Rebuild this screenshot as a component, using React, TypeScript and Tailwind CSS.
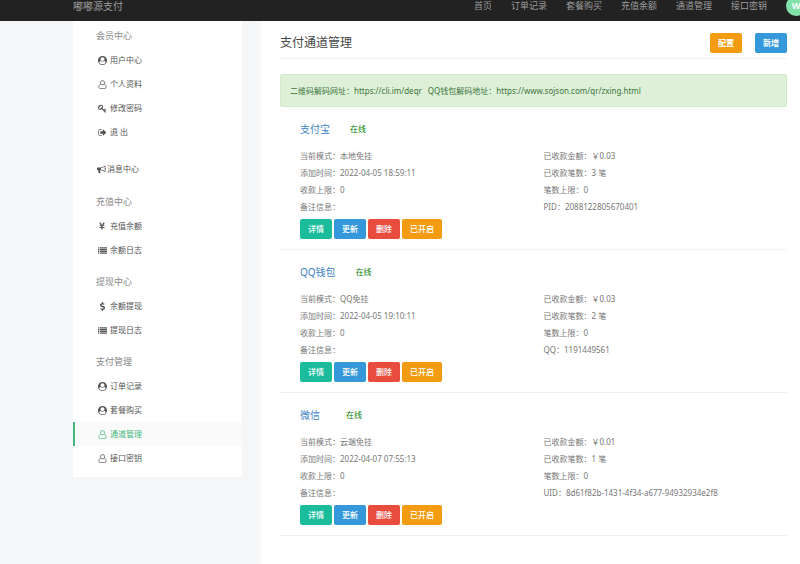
import type { ReactNode } from 'react'
import { FaDollarSign, FaYenSign } from 'react-icons/fa'

interface Channel {
  name: string
  mode: string
  addedAt: string
  amount: string
  count: number
  idLabel: string
  idValue: string
}

interface MenuItem {
  label: string
  icon: ReactNode
  active?: boolean
}

interface MenuGroup {
  title: string
  items: MenuItem[]
}

function Glyph({ d }: { d: string }) {
  return (
    <svg viewBox="0 0 1792 1792" className="h-[9px] w-[9px]" fill="currentColor" aria-hidden="true">
      <path d={d} />
    </svg>
  )
}

const KEY =
  'M832 512q0-80-56-136t-136-56-136 56-56 136q0 42 19 83-41-19-83-19-80 0-136 56t-56 136 56 136 136 56 136-56 56-136q0-42-19-83 41 19 83 19 80 0 136-56t56-136zm851 704q0 17-49 66t-66 49q-9 0-28.5-16t-36.5-33-38.5-40-24.5-26l-96 96 220 220q28 28 28 68 0 42-39 81t-81 39q-40 0-68-28l-671-671q-176 131-365 131-163 0-265.5-102.5t-102.5-265.5q0-160 95-313t248-248 313-95q163 0 265.5 102.5t102.5 265.5q0 189-131 365l355 355 96-96q-3-3-26-24.5t-40-38.5-33-36.5-16-28.5q0-17 49-66t66-49q13 0 23 10 6 6 46 44.5t82 79.5 86.5 86 73 78 28.5 41z'
const SIGN_OUT =
  'M704 1440q0 4 1 20t.5 26.5-3 23.5-10 19.5-20.5 6.5h-320q-119 0-203.5-84.5t-84.5-203.5v-704q0-119 84.5-203.5t203.5-84.5h320q13 0 22.5 9.5t9.5 22.5q0 4 1 20t.5 26.5-3 23.5-10 19.5-20.5 6.5h-320q-66 0-113 47t-47 113v704q0 66 47 113t113 47h312l11.5 1 11.5 3 8 5.5 7 9 2 13.5zm928-544q0 26-19 45l-544 544q-19 19-45 19t-45-19-19-45v-288h-448q-26 0-45-19t-19-45v-384q0-26 19-45t45-19h448v-288q0-26 19-45t45-19 45 19l544 544q19 19 19 45z'
const BULLHORN =
  'M1664 640q53 0 90.5 37.5t37.5 90.5-37.5 90.5-90.5 37.5v384q0 52-38 90t-90 38q-417-347-812-380-58 19-91 66t-31 100.5 40 92.5q-20 33-23 65.5t6 58 33.5 55 48 50 61.5 50.5q-29 58-111.5 83t-168.5 11.5-132-55.5q-7-23-29.5-87.5t-32-94.5-23-89-15-101 3.5-98.5 22-110.5h-122q-66 0-113-47t-47-113v-192q0-66 47-113t113-47h480q435 0 896-384 52 0 90 38t38 90v384zm-128 604v-954q-394 302-768 343v270q377 42 768 341z'
const USER_CIRCLE =
  'M1523 1339q-22-155-87.5-257.5t-184.5-118.5q-67 74-159.5 115.5t-195.5 41.5-195.5-41.5-159.5-115.5q-119 16-184.5 118.5t-87.5 257.5q106 150 271 237.5t356 87.5 356-87.5 271-237.5zm-243-699q0-159-112.5-271.5t-271.5-112.5-271.5 112.5-112.5 271.5 112.5 271.5 271.5 112.5 271.5-112.5 112.5-271.5zm512 256q0 182-71 347.5t-190.5 286-285.5 191.5-349 71q-182 0-348-71t-286-191-191-286-71-348 71-348 191-286 286-191 348-71 348 71 286 191 191 286 71 348z'
const LIST =
  'M0 256h256v224H0zM384 256h1408v224H384zM0 608h256v224H0zM384 608h1408v224H384zM0 960h256v224H0zM384 960h1408v224H384zM0 1312h256v224H0zM384 1312h1408v224H384z'

function UserOutline() {
  return (
    <svg viewBox="0 0 18 18" className="h-[9px] w-[9px]" fill="none" stroke="currentColor" strokeWidth="1.5" aria-hidden="true">
      <circle cx="9" cy="5.5" r="4.3" />
      <path d="M5.2 8.6C2.6 9.2 1.8 11.5 1.8 14.2c0 1.8 1 3 2.6 3h9.2c1.6 0 2.6-1.2 2.6-3 0-2.7-.8-5-3.4-5.6" />
    </svg>
  )
}

const navLinks = ['首页', '订单记录', '套餐购买', '充值余额', '通道管理', '接口密钥']

const memberGroup: MenuGroup = {
  title: '会员中心',
  items: [
    { label: '用户中心', icon: <Glyph d={USER_CIRCLE} /> },
    { label: '个人资料', icon: <UserOutline /> },
    { label: '修改密码', icon: <Glyph d={KEY} /> },
    { label: '退 出', icon: <Glyph d={SIGN_OUT} /> },
  ],
}

const otherGroups: MenuGroup[] = [
  {
    title: '充值中心',
    items: [
      { label: '充值余额', icon: <FaYenSign className="h-2 w-2" /> },
      { label: '余额日志', icon: <Glyph d={LIST} /> },
    ],
  },
  {
    title: '提现中心',
    items: [
      { label: '余额提现', icon: <FaDollarSign className="h-[9px] w-[9px]" /> },
      { label: '提现日志', icon: <Glyph d={LIST} /> },
    ],
  },
  {
    title: '支付管理',
    items: [
      { label: '订单记录', icon: <Glyph d={USER_CIRCLE} /> },
      { label: '套餐购买', icon: <Glyph d={USER_CIRCLE} /> },
      { label: '通道管理', icon: <UserOutline />, active: true },
      { label: '接口密钥', icon: <UserOutline /> },
    ],
  },
]

const channels: Channel[] = [
  { name: '支付宝', mode: '本地免挂', addedAt: '2022-04-05 18:59:11', amount: '0.03', count: 3, idLabel: 'PID', idValue: '2088122805670401' },
  { name: 'QQ钱包', mode: 'QQ免挂', addedAt: '2022-04-05 19:10:11', amount: '0.03', count: 2, idLabel: 'QQ', idValue: '1191449561' },
  { name: '微信', mode: '云端免挂', addedAt: '2022-04-07 07:55:13', amount: '0.01', count: 1, idLabel: 'UID', idValue: '8d61f82b-1431-4f34-a677-94932934e2f8' },
]

const tones = {
  teal: 'bg-[#1abc9c]',
  blue: 'bg-[#3498db]',
  red: 'bg-[#e74c3c]',
  orange: 'bg-[#f39c12]',
}

function Button({ tone, bold, children }: { tone: keyof typeof tones; bold?: boolean; children: ReactNode }) {
  return (
    <button
      type="button"
      className={`h-5 rounded-[2px] px-2 text-white ${bold ? 'font-bold' : 'font-medium'} ${tones[tone]}`}
    >
      {children}
    </button>
  )
}

function Group({ group }: { group: MenuGroup }) {
  return (
    <section>
      <h2 className="h-6 pl-[23px] text-[9px] leading-6 text-[#888]">{group.title}</h2>
      <ul>
        {group.items.map((item) => (
          <li key={item.label}>
            <a
              href="#"
              className={`flex h-6 items-center gap-[2px] border-l-2 pl-[21px] ${
                item.active ? 'border-[#45b97c] bg-[#fafafa] text-[#45b97c]' : 'border-transparent text-[#555]'
              }`}
            >
              <span className="flex w-3 justify-center">{item.icon}</span>
              {item.label}
            </a>
          </li>
        ))}
      </ul>
    </section>
  )
}

function ChannelCard({ channel }: { channel: Channel }) {
  return (
    <article className="border-b border-[#f0f0f0] pt-[14px] pb-[10px] pl-5">
      <h2 className="flex h-4 items-center text-[10px]">
        <a href="#" className="min-w-[26px] text-[#4183c4]">{channel.name}</a>
        <span className="ml-5 text-[8px] text-[green]">在线</span>
      </h2>
      <div className="mt-[10px] grid grid-cols-2 leading-[17px] text-[#777]">
        <div>
          <p>当前模式：{channel.mode}</p>
          <p>添加时间：{channel.addedAt}</p>
          <p>收款上限：0</p>
          <p>备注信息：</p>
        </div>
        <div>
          <p>已收款金额：￥{channel.amount}</p>
          <p>已收款笔数：{channel.count} 笔</p>
          <p>笔数上限：0</p>
          <p>{channel.idLabel}：{channel.idValue}</p>
        </div>
      </div>
      <div className="mt-1 flex gap-[2px]">
        <Button tone="teal">详情</Button>
        <Button tone="blue">更新</Button>
        <Button tone="red">删除</Button>
        <Button tone="orange">已开启</Button>
      </div>
    </article>
  )
}

export default function App() {
  return (
    <div className="flex min-h-screen flex-col bg-[#f4f6f8] font-['Noto_Sans','Noto_Sans_CJK_SC',sans-serif] text-[8px]">
      <header className="overflow-hidden bg-[#222] pl-[73px] text-[#9d9d9d]">
        <div className="-mt-[10px] -mr-1.5 flex h-[31px] items-center justify-between leading-none">
          <a href="#" className="text-[10px]">嘟嘟源支付</a>
          <nav className="flex items-center gap-[19px] text-[9px]">
            {navLinks.map((link) => (
              <a key={link} href="#">{link}</a>
            ))}
            <span className="flex h-5 w-5 items-center justify-center rounded-full bg-[#82e0aa] text-[9px] font-bold text-white">
              W
            </span>
          </nav>
        </div>
      </header>

      <div className="flex flex-1 items-stretch gap-[19px] pl-[73px]">
        <aside className="w-[169px] shrink-0 self-start bg-white pt-[3px] pb-[7px]">
          <Group group={memberGroup} />
          <div className="mt-3 py-px">
            <a href="#" className="flex h-6 items-center gap-px pl-6 text-[#555]">
              <Glyph d={BULLHORN} />
              消息中心
            </a>
          </div>
          {otherGroups.map((group) => (
            <div key={group.title} className="mt-2">
              <Group group={group} />
            </div>
          ))}
        </aside>

        <main className="flex-1 bg-white pr-[13px] pl-[19px]">
          <div className="flex items-center justify-between border-b border-[#f0f0f0] pt-3 pb-[5px]">
            <h1 className="text-[12px] text-[#444]">支付通道管理</h1>
            <div className="flex gap-[13px]">
              <Button tone="orange" bold>配置</Button>
              <Button tone="blue" bold>新增</Button>
            </div>
          </div>
          <div className="mt-[15px] flex h-[33px] items-center gap-[6px] rounded-[2px] border border-[#d6e9c6] bg-[#dff0d8] px-[9px] text-[#3c763d]">
            <span>二维码解码网址：https://cli.im/deqr</span>
            <span>QQ钱包解码地址：https://www.sojson.com/qr/zxing.html</span>
          </div>
          {channels.map((channel) => (
            <ChannelCard key={channel.name} channel={channel} />
          ))}
        </main>
      </div>
    </div>
  )
}
